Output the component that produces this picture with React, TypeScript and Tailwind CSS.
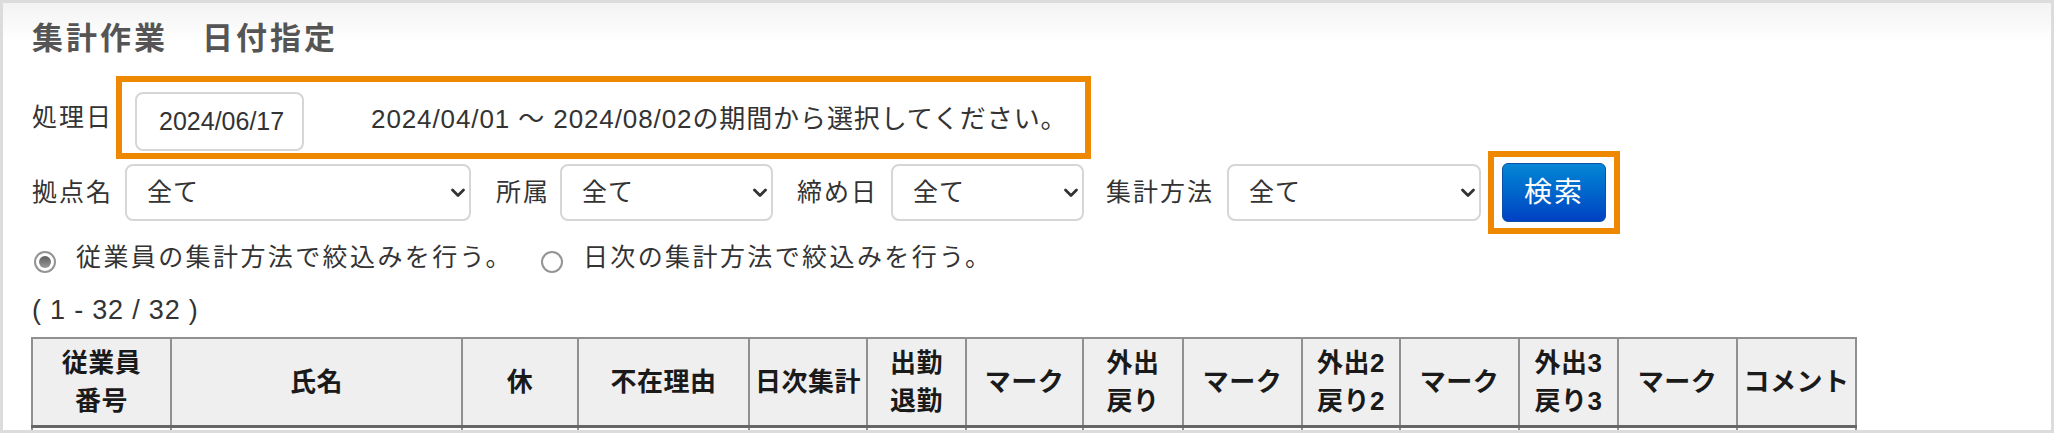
import React from 'react';

const font = { fontFamily: '"Liberation Sans", "Noto Sans CJK JP", sans-serif' };

const Chevron: React.FC = () => (
  <svg width="16" height="10" viewBox="0 0 16 10" className="shrink-0">
    <path d="M2.5 2 L8 7.5 L13.5 2" fill="none" stroke="#333" strokeWidth="2.8" strokeLinecap="round" strokeLinejoin="round" />
  </svg>
);

interface SelectProps {
  width: string;
}

const FakeSelect: React.FC<SelectProps> = ({ width }) => (
  <div
    className={`${width} h-[57px] flex items-center justify-between pl-[20px] pr-[3px] border-2 border-[#d6d6d6] rounded-[8px] bg-white text-[25px] text-[#333]`}
  >
    <span className="tracking-[1px]">全て</span>
    <Chevron />
  </div>
);

const Radio: React.FC<{ checked?: boolean }> = ({ checked }) => (
  <span className="w-[22px] h-[22px] rounded-full border-2 border-[#949494] bg-white flex items-center justify-center shrink-0">
    {checked && <span className="w-[12px] h-[12px] rounded-full bg-gradient-to-b from-[#5f5f5f] to-[#9a9a9a]" />}
  </span>
);

const columns = [
  { w: 'w-[139px]', label: ['従業員', '番号'] },
  { w: 'w-[291px]', label: ['氏名'] },
  { w: 'w-[116px]', label: ['休'] },
  { w: 'w-[171px]', label: ['不在理由'] },
  { w: 'w-[118px]', label: ['日次集計'] },
  { w: 'w-[99px]', label: ['出勤', '退勤'] },
  { w: 'w-[117px]', label: ['マーク'] },
  { w: 'w-[100px]', label: ['外出', '戻り'] },
  { w: 'w-[119px]', label: ['マーク'] },
  { w: 'w-[98px]', label: ['外出2', '戻り2'] },
  { w: 'w-[119px]', label: ['マーク'] },
  { w: 'w-[99px]', label: ['外出3', '戻り3'] },
  { w: 'w-[119px]', label: ['マーク'] },
  { w: 'w-[119px]', label: ['コメント'] },
];

const App: React.FC = () => {
  return (
    <div className="w-[2064px] h-[443px] bg-white" style={font}>
      <div className="w-[2054px] h-[433px] border-[3px] border-[#dcdcdc] overflow-hidden bg-gradient-to-b from-[#f3f3f3] to-white to-[40px] pl-[29px]">
        {/* title */}
        <div className="pt-[16px] h-[56px] text-[31px] leading-[40px] font-bold text-[#555] tracking-[3px]">
          集計作業　日付指定
        </div>

        {/* 処理日 */}
        <div className="mt-[17px] flex items-center h-[83px] text-[25px] text-[#333]">
          <span className="tracking-[2px]">処理日</span>
          <div className="ml-[3px] h-[83px] border-[6px] border-[#ee8800] flex items-end pb-[2px] pl-[13px] pr-[18px]">
            <div className="w-[169px] h-[59px] border-2 border-[#d6d6d6] rounded-[8px] flex items-center pl-[22px] text-[25px] text-[#333]">
              2024/06/17
            </div>
            <span className="ml-[67px] self-center mt-[6px] text-[26px] tracking-[0.9px]">
              2024/04/01 ～ 2024/08/02の期間から選択してください。
            </span>
          </div>
        </div>

        {/* filters */}
        <div className="mt-[5px] h-[57px] flex items-center text-[25px] text-[#333]">
          <span className="tracking-[2px] mr-[12px]">拠点名</span>
          <FakeSelect width="w-[346px]" />
          <span className="tracking-[2px] ml-[25px] mr-[10px]">所属</span>
          <FakeSelect width="w-[213px]" />
          <span className="tracking-[2px] ml-[24px] mr-[13px]">締め日</span>
          <FakeSelect width="w-[193px]" />
          <span className="tracking-[2px] ml-[22px] mr-[13px]">集計方法</span>
          <FakeSelect width="w-[254px]" />
          <div className="ml-[7px] -my-[11px] border-[6px] border-[#ee8800] px-[8px] py-[6px]">
            <button className="w-[104px] h-[59px] rounded-[6px] border border-[#0a4fa8] bg-gradient-to-b from-[#0a86d4] to-[#0040c2] text-white text-[28px] tracking-[2px]">
              検索
            </button>
          </div>
        </div>

        {/* radios */}
        <div className="mt-[17px] h-[40px] flex items-center text-[25px] text-[#333]">
          <span className="ml-[2px] mt-[8px]"><Radio checked /></span>
          <span className="ml-[20px] tracking-[2.4px]">従業員の集計方法で絞込みを行う。</span>
          <span className="ml-[28px] mt-[8px]"><Radio /></span>
          <span className="ml-[20px] tracking-[2.4px]">日次の集計方法で絞込みを行う。</span>
        </div>

        <div className="mt-[12px] h-[40px] leading-[40px] text-[27px] tracking-[0.8px] text-[#333]">( 1 - 32 / 32 )</div>

        {/* table */}
        <table className="mt-[7px] ml-[-1px] border-collapse">
          <thead>
            <tr>
              {columns.map((c, i) => (
                <th
                  key={i}
                  className={`${c.w} h-[88px] p-0 border-2 border-[#909090] border-b-[3px] border-b-[#666] bg-[#efefef] text-[26px] leading-[38px] font-bold text-[#1a1a1a] text-center align-middle tracking-[0.5px]`}
                >
                  {c.label.map((l, j) => (
                    <div key={j}>{l}</div>
                  ))}
                </th>
              ))}
            </tr>
          </thead>
          <tbody>
            <tr>
              {columns.map((c, i) => (
                <td key={i} className="h-[40px] border-2 border-[#909090] bg-white" />
              ))}
            </tr>
          </tbody>
        </table>
      </div>
    </div>
  );
};

export default App;
